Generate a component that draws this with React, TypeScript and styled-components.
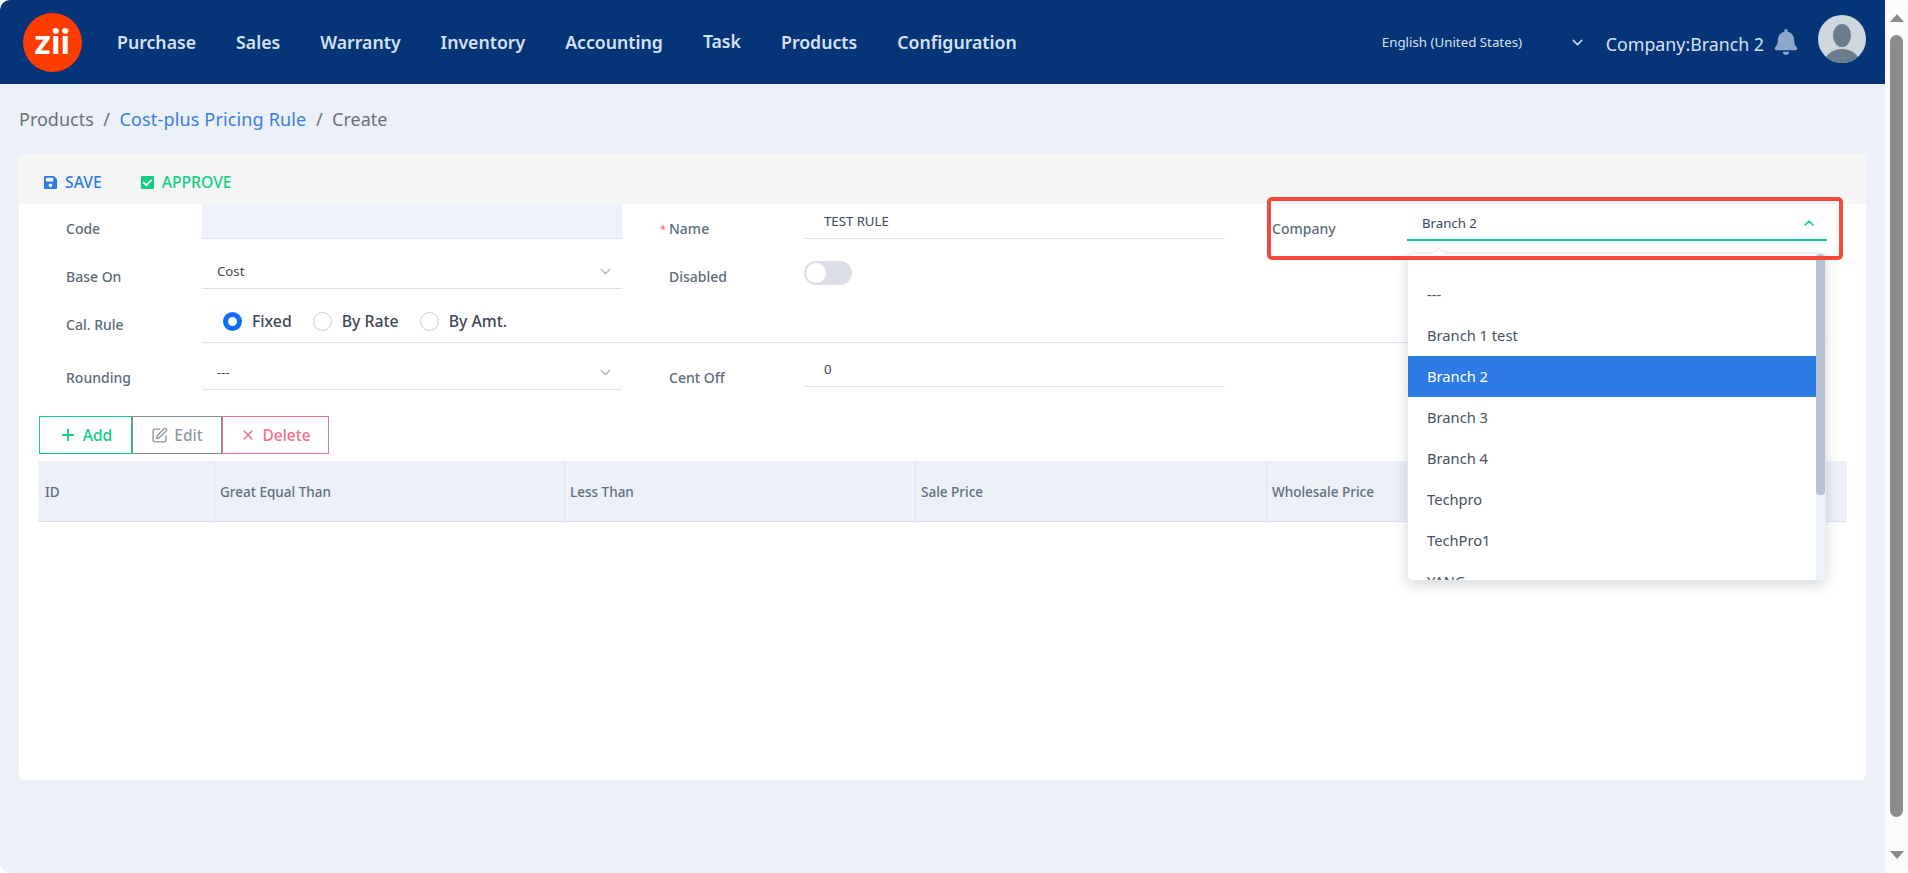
import styled, { createGlobalStyle } from 'styled-components'
import { ChevronDown, ChevronUp, Plus, SquarePen, X } from 'lucide-react'
import { FaBell, FaCheckSquare, FaSave } from 'react-icons/fa'

const GlobalStyle = createGlobalStyle`
  html, body, #root {
    margin: 0;
    height: 100%;
    background: #fff;
    overflow: hidden;
  }
  * {
    box-sizing: border-box;
  }
  body {
    font-family: "Noto Sans", "Open Sans", sans-serif;
  }
`

const Shell = styled.div`
  height: 873px;
  display: flex;
  border-radius: 10px;
  overflow: hidden;
`

const Page = styled.div`
  flex: 1;
  min-width: 0;
  background: #ecf1f9;
  display: flex;
  flex-direction: column;
`

const Header = styled.header`
  height: 84px;
  flex: none;
  background: #053478;
  display: flex;
  align-items: center;
  padding: 0 19px 0 23px;
`

const Logo = styled.div`
  width: 59px;
  height: 59px;
  flex: none;
  border-radius: 50%;
  background: #ff3d00;
  color: #fff;
  display: flex;
  align-items: center;
  justify-content: center;
  font-family: "Lato", sans-serif;
  font-weight: 900;
  font-size: 35px;
  letter-spacing: 0.5px;
  line-height: 1;
  padding-bottom: 4px;
`

const Nav = styled.nav`
  display: flex;
  align-items: center;
  gap: 40px;
  margin-left: 35px;
`

const NavItem = styled.a<{ $raised?: boolean }>`
  color: #d6e1f0;
  font-size: 17.7px;
  font-weight: 600;
  margin-bottom: ${(p) => (p.$raised ? '3px' : '0')};
`

const HeaderRight = styled.div`
  margin-left: auto;
  display: flex;
  align-items: center;
`

const Language = styled.div`
  width: 204px;
  display: flex;
  align-items: center;
  justify-content: space-between;
  color: #d6e1f0;
  font-size: 13.3px;
`

const CompanyName = styled.div`
  color: #d6e1f0;
  font-size: 17.8px;
  margin-left: 20px;
  padding-top: 3px;
`

const Bell = styled(FaBell)`
  color: #8fa6c9;
  font-size: 26px;
  margin-left: 9px;
`

const Avatar = styled.svg`
  width: 48px;
  height: 48px;
  margin: 0 0 6px 19px;
  border-radius: 50%;
`

const Crumbs = styled.div`
  height: 70px;
  flex: none;
  padding-left: 19px;
  display: flex;
  align-items: center;
  gap: 9.5px;
  font-size: 18px;
  color: #6b6f76;
`

const CrumbLink = styled.a`
  color: #3b7ddd;
  letter-spacing: 0.15px;
`

const Card = styled.main`
  margin: 0 19px;
  height: 626px;
  background: #fff;
  border-radius: 6px;
  display: flex;
  flex-direction: column;
`

const Toolbar = styled.div`
  height: 50px;
  flex: none;
  background: #f5f5f5;
  border-radius: 6px 6px 0 0;
  padding: 6px 0 0 24px;
  display: flex;
  align-items: center;
  gap: 38px;
`

const ToolButton = styled.button<{ $color: string }>`
  border: 0;
  padding: 0;
  background: none;
  display: flex;
  align-items: center;
  gap: 7px;
  font: inherit;
  font-size: 15.7px;
  font-weight: 500;
  color: ${(p) => p.$color};
`

const Form = styled.div`
  position: relative;
  display: grid;
  grid-template-columns: 183px 420px 182px 421px 182px 420px;
  grid-template-rows: 35px 50px 54px 47px;
  flex: none;
`

const Label = styled.label<{ $drop?: number }>`
  align-self: end;
  padding: 0 0 ${(p) => p.$drop ?? 0}px 47px;
  line-height: 20px;
  font-size: 14px;
  font-weight: 500;
  color: #5c6b7d;
  position: relative;
`

const Required = styled.span`
  position: absolute;
  left: 38px;
  color: #f56c6c;
  font-size: 11px;
`

const Field = styled.div<{ $inset?: number; $lift?: number; $readonly?: boolean }>`
  align-self: end;
  height: 35px;
  margin-bottom: ${(p) => p.$lift ?? 0}px;
  padding: 0 8px 0 ${(p) => p.$inset ?? 15}px;
  display: flex;
  align-items: center;
  justify-content: space-between;
  border-bottom: 1px solid #d9e2ee;
  background: ${(p) => (p.$readonly ? '#eef2fa' : 'transparent')};
  font-size: 13.2px;
  color: #3c4858;
`

const OpenField = styled(Field)`
  position: relative;
  height: 36px;
  padding: 2px 10px 0 15px;
  margin-bottom: -2px;
  border-bottom: 2px solid #0fd082;
`

const Chevron = styled(ChevronDown)`
  color: #b9c0c9;
`

const OpenChevron = styled(ChevronUp)`
  color: #0fd082;
`

const RadioField = styled.div`
  grid-column: 2 / 7;
  align-self: end;
  height: 54px;
  padding: 11px 0 0 21px;
  display: flex;
  align-items: center;
  gap: 21px;
  border-bottom: 1px solid #d9e2ee;
`

const RadioOption = styled.label`
  display: flex;
  align-items: center;
  gap: 10px;
  font-size: 15.8px;
  font-weight: 500;
  color: #3c4858;
`

const RadioDot = styled.span<{ $checked?: boolean }>`
  width: 19px;
  height: 19px;
  border-radius: 50%;
  background: #fff;
  border: ${(p) => (p.$checked ? '5.5px solid #0d6efd' : '1px solid #c3ccd8')};
`

const SwitchCell = styled.div`
  align-self: end;
  padding-bottom: 4px;
`

const Switch = styled.div`
  width: 48px;
  height: 24px;
  border-radius: 12px;
  background: #dcdfe6;
  padding: 2px;
`

const SwitchKnob = styled.div`
  width: 20px;
  height: 20px;
  border-radius: 50%;
  background: #fff;
`

const Dropdown = styled.div`
  position: absolute;
  top: 48px;
  left: 0;
  width: 419px;
  height: 328px;
  z-index: 5;
  background: #fff;
  border: 1px solid #e4e9f0;
  border-radius: 5px;
  box-shadow: 0 4px 14px rgba(60, 72, 88, 0.22);
  display: flex;
`

const DropdownArrow = styled.span`
  position: absolute;
  top: -5px;
  left: 26px;
  width: 9px;
  height: 9px;
  background: #fff;
  border-left: 1px solid #e4e9f0;
  border-top: 1px solid #e4e9f0;
  transform: rotate(45deg);
`

const OptionList = styled.ul`
  flex: 1;
  margin: 0;
  padding: 20px 0 0;
  list-style: none;
  overflow: hidden;
`

const Option = styled.li<{ $active?: boolean }>`
  height: 41px;
  line-height: 41px;
  padding-left: 19px;
  font-size: 14.7px;
  background: ${(p) => (p.$active ? '#2e7be4' : 'transparent')};
  color: ${(p) => (p.$active ? '#fff' : '#46525f')};
`

const DropTrack = styled.div`
  width: 9px;
  flex: none;
  background: #edf1f8;
  border-radius: 0 5px 5px 0;
`

const DropThumb = styled.div`
  height: 241px;
  background: #b5c1d2;
  border-radius: 4px;
`

const Highlight = styled.div`
  position: absolute;
  left: 1248px;
  top: -7px;
  width: 576px;
  height: 63px;
  z-index: 6;
  border: 4px solid #f5483b;
  border-radius: 5px;
  pointer-events: none;
`

const TableArea = styled.section`
  margin: 26px 19px 0;
`

const ActionRow = styled.div`
  display: flex;
  height: 38px;
  padding-left: 1px;
`

const ActionButton = styled.button<{ $color: string; $text: string; $width: number }>`
  width: ${(p) => p.$width}px;
  height: 38px;
  padding: 0;
  display: flex;
  align-items: center;
  justify-content: center;
  gap: 6px;
  background: #fff;
  border: 1px solid ${(p) => p.$color};
  color: ${(p) => p.$text};
  font: inherit;
  font-size: 15.5px;
  font-weight: 500;
`

const TableHead = styled.div`
  margin-top: 7px;
  height: 61px;
  display: grid;
  grid-template-columns: 177px 350px 351px 351px 580px;
  background: #ecf1f8;
  border-bottom: 1px solid #dde3ee;
`

const HeadCell = styled.div`
  display: flex;
  align-items: center;
  padding: 1px 0 0 5px;
  font-size: 13.5px;
  font-weight: 500;
  color: #5f6f80;
  border-right: 1px solid #dde3ee;

  &:first-child {
    padding-left: 7px;
  }

  &:last-child {
    border-right: 0;
  }
`

const ScrollBar = styled.div`
  width: 23px;
  flex: none;
  background: #fbfbfb;
  display: flex;
  flex-direction: column;
  align-items: center;
  padding: 14px 0;
`

const ArrowUp = styled.span`
  border-left: 7.5px solid transparent;
  border-right: 7.5px solid transparent;
  border-bottom: 8px solid #8b8b8b;
`

const ArrowDown = styled.span`
  border-left: 7.5px solid transparent;
  border-right: 7.5px solid transparent;
  border-top: 8px solid #8b8b8b;
`

const ScrollThumb = styled.div`
  width: 13px;
  flex: 1;
  margin: 13px 0 34px;
  background: #8b8b8b;
  border-radius: 7px;
`

const navItems = ['Purchase', 'Sales', 'Warranty', 'Inventory', 'Accounting', 'Task', 'Products', 'Configuration']
const companies = ['---', 'Branch 1 test', 'Branch 2', 'Branch 3', 'Branch 4', 'Techpro', 'TechPro1', 'YANG']
const columns = ['ID', 'Great Equal Than', 'Less Than', 'Sale Price', 'Wholesale Price']

function App() {
  return (
    <Shell>
      <GlobalStyle />
      <Page>
        <Header>
          <Logo>zii</Logo>
          <Nav>
            {navItems.map((item) => (
              <NavItem key={item} $raised={item === 'Task'}>{item}</NavItem>
            ))}
          </Nav>
          <HeaderRight>
            <Language>
              English (United States)
              <ChevronDown size={17} />
            </Language>
            <CompanyName>Company:Branch 2</CompanyName>
            <Bell />
            <Avatar viewBox="0 0 48 48">
              <rect width="48" height="48" fill="#cdd7dd" />
              <ellipse cx="24" cy="20.5" rx="9" ry="11.5" fill="#6b7c8c" />
              <ellipse cx="24" cy="47" rx="17" ry="13" fill="#6b7c8c" />
            </Avatar>
          </HeaderRight>
        </Header>

        <Crumbs>
          <span>Products</span>
          <span>/</span>
          <CrumbLink>Cost-plus Pricing Rule</CrumbLink>
          <span>/</span>
          <span>Create</span>
        </Crumbs>

        <Card>
          <Toolbar>
            <ToolButton $color="#2e7be4"><FaSave size={15} />SAVE</ToolButton>
            <ToolButton $color="#0fd082"><FaCheckSquare size={15} />APPROVE</ToolButton>
          </Toolbar>

          <Form>
            <Label>Code</Label>
            <Field $readonly />
            <Label>
              <Required>*</Required>
              Name
            </Label>
            <Field $inset={20}>TEST RULE</Field>
            <Label>Company</Label>
            <OpenField>
              Branch 2
              <OpenChevron size={16} strokeWidth={2.5} />
              <Dropdown>
                <DropdownArrow />
                <OptionList>
                  {companies.map((name) => (
                    <Option key={name} $active={name === 'Branch 2'}>{name}</Option>
                  ))}
                </OptionList>
                <DropTrack>
                  <DropThumb />
                </DropTrack>
              </Dropdown>
            </OpenField>

            <Label $drop={2}>Base On</Label>
            <Field>
              Cost
              <Chevron size={17} />
            </Field>
            <Label $drop={2}>Disabled</Label>
            <SwitchCell>
              <Switch>
                <SwitchKnob />
              </Switch>
            </SwitchCell>
            <span />
            <span />

            <Label $drop={8}>Cal. Rule</Label>
            <RadioField>
              <RadioOption><RadioDot $checked />Fixed</RadioOption>
              <RadioOption><RadioDot />By Rate</RadioOption>
              <RadioOption><RadioDot />By Amt.</RadioOption>
            </RadioField>

            <Label $drop={2}>Rounding</Label>
            <Field>
              ---
              <Chevron size={17} />
            </Field>
            <Label $drop={2}>Cent Off</Label>
            <Field $inset={20} $lift={3}>0</Field>

            <Highlight />
          </Form>

          <TableArea>
            <ActionRow>
              <ActionButton $color="#0fd082" $text="#0fd082" $width={93}><Plus size={18} strokeWidth={2.5} />Add</ActionButton>
              <ActionButton $color="#7d8a99" $text="#8f98a3" $width={90}><SquarePen size={17} />Edit</ActionButton>
              <ActionButton $color="#f0708a" $text="#f0708a" $width={107}><X size={16} />Delete</ActionButton>
            </ActionRow>
            <TableHead>
              {columns.map((col) => (
                <HeadCell key={col}>{col}</HeadCell>
              ))}
            </TableHead>
          </TableArea>
        </Card>
      </Page>
      <ScrollBar>
        <ArrowUp />
        <ScrollThumb />
        <ArrowDown />
      </ScrollBar>
    </Shell>
  )
}

export default App
